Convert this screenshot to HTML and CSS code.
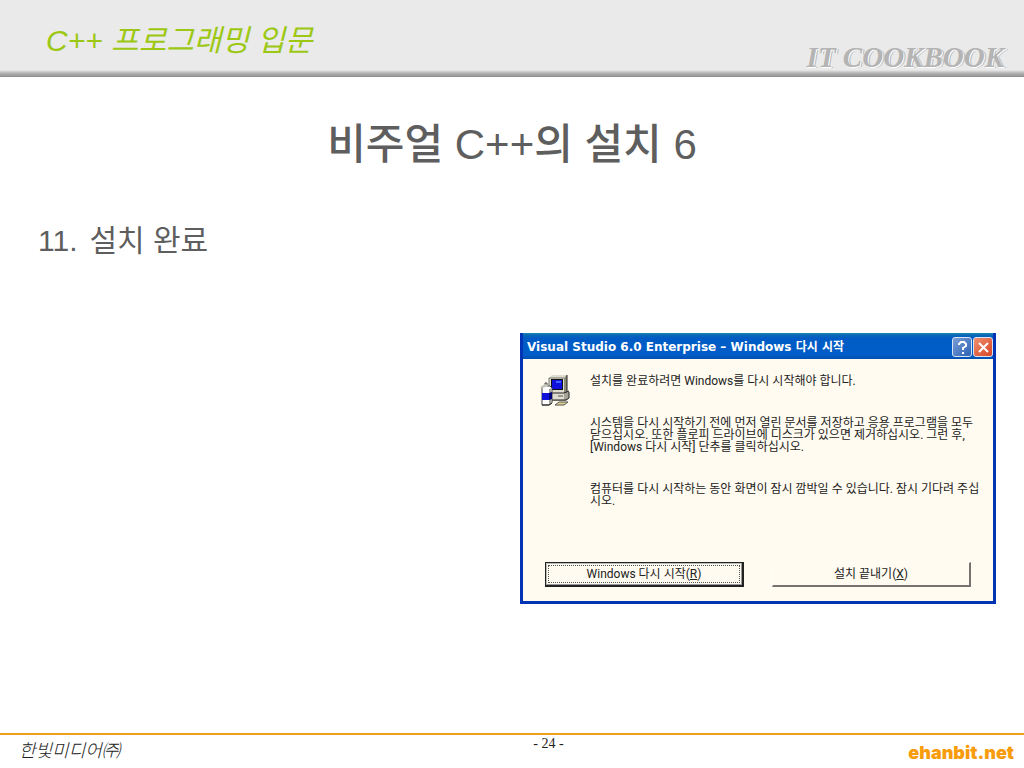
FILE: index.html
```html
<!DOCTYPE html>
<html lang="ko">
<head>
<meta charset="utf-8">
<meta name="viewport" content="width=device-width, initial-scale=1">
<title>C++ 프로그래밍 입문</title>
<link rel="stylesheet" href="styles.css">
</head>
<body>
<header class="slide-header">
  <p class="course">C++ 프로그래밍 입문</p>
  <p class="series">IT COOKBOOK</p>
</header>
<main class="slide-body">
  <h1 class="slide-title">비주얼 <span class="latin">C++</span>의 설치 <span class="latin">6</span></h1>
  <p class="step"><span class="step-number">11.</span> <span>설치 완료</span></p>
  <section class="dialog" role="dialog" aria-labelledby="dialog-title">
    <div class="titlebar">
      <h2 class="dialog-title" id="dialog-title">Visual Studio 6.0 Enterprise – Windows 다시 시작</h2>
      <button class="caption-button help" type="button" aria-label="도움말">
        <svg width="15" height="15" viewBox="0 0 15 15" fill="none" stroke="#fff" stroke-width="2"><path d="M4 5V4l2-2h3l2 2v2L8 8v2M7 13h2"/></svg>
      </button>
      <button class="caption-button close" type="button" aria-label="닫기">
        <svg width="15" height="15" viewBox="0 0 15 15" fill="none" stroke="#fff" stroke-width="2"><path d="M3 3l9 9M12 3l-9 9"/></svg>
      </button>
    </div>
    <div class="dialog-content">
      <svg class="setup-icon" width="32" height="32" viewBox="0 0 32 32" aria-hidden="true">
        <path d="M9 3l3-3h15v16l-2 3H9z" fill="#deddd0"/>
        <path d="M24 3l3-3v16l-3 3z" fill="#8c8c78"/>
        <path d="M9 3h15M9 3v12" stroke="#77776c" fill="none"/>
        <path d="M27 0v18" stroke="#222" fill="none"/>
        <path d="M11 4h12v11H11z" fill="#111"/>
        <path d="M12 5h10v9H12z" fill="#1010dc"/>
        <path d="M16 6h5v2h-5z" fill="#3c65ff"/>
        <path d="M10 18h14l5-2v7l-3 3H10z" fill="#a5a496"/>
        <path d="M10 18h14v7H10z" fill="#deddd0"/>
        <path d="M10 18h14l5-2M10 25h16l3-2v-6" stroke="#222" fill="none"/>
        <path d="M18 21h5" stroke="#555"/>
        <path d="M15 30l4-3h9l-4 3z" fill="#e2d48c" stroke="#555"/>
        <path d="M2 13l2-2h1V8h2v3h3l2 2v15l-3 2H2z" fill="#fff" stroke="#444"/>
        <path d="M0 12l5-3 4 2-7 2z" fill="#c5c5bd"/>
        <path d="M2 18h7v7H2z" fill="#1010d8"/>
        <path d="M9 14l3-1v15l-3 2z" fill="#a2a29d"/>
        <path d="M9 18l3-1v7l-3 1z" fill="#000078"/>
        <path d="M2 30h7l3-2" stroke="#222" fill="none"/>
      </svg>
      <div class="message">
        <p>설치를 완료하려면 Windows를 다시 시작해야 합니다.</p>
        <p>시스템을 다시 시작하기 전에 먼저 열린 문서를 저장하고 응용 프로그램을 모두<br>닫으십시오. 또한 플로피 드라이브에 디스크가 있으면 제거하십시오. 그런 후,<br>[Windows 다시 시작] 단추를 클릭하십시오.</p>
        <p>컴퓨터를 다시 시작하는 동안 화면이 잠시 깜박일 수 있습니다. 잠시 기다려 주십<br>시오.</p>
      </div>
    </div>
    <div class="dialog-actions">
      <button class="action default" type="button"><span class="focus-ring">Windows 다시 시작(<u>R</u>)</span></button>
      <button class="action" type="button">설치 끝내기(<u>X</u>)</button>
    </div>
  </section>
</main>
<footer class="slide-footer">
  <p class="publisher">한빛미디어㈜</p>
  <p class="page-number">- 24 -</p>
  <p class="site"><a href="#">ehanbit.net</a></p>
</footer>
</body>
</html>
```

FILE: styles.css
```css
* { box-sizing: border-box; }
body {
  margin: 0;
  min-height: 100vh;
  display: flex;
  flex-direction: column;
  background: #fff;
  color: #5e5e5e;
  font-family: "Liberation Sans", "Noto Sans CJK KR", sans-serif;
}
p, h1, h2 { margin: 0; font-weight: 400; }

.slide-header {
  display: flex;
  justify-content: space-between;
  align-items: flex-start;
  height: 77px;
  padding: 0 20px 0 46px;
  background: linear-gradient(#eaeaea 0, #eaeaea 70px, #b5b5b5 73px, #8c8c8c 77px);
}
.course {
  padding-top: 21px;
  color: #9cc814;
  font-size: 30px;
  line-height: 40px;
  font-style: italic;
}
.series {
  padding-top: 40px;
  color: #b4b4b4;
  font: italic bold 29px/34px "Liberation Serif", serif;
  text-shadow: 1px 1px 0 #fff, 2px 1px 0 #b4b4b4;
}

.slide-body {
  flex: 1;
  display: flex;
  flex-direction: column;
  padding: 36px 28px 40px;
}
.slide-title {
  text-align: center;
  font-size: 42px;
  line-height: 64px;
  font-weight: 500;
}
.latin { font-weight: 400; }
.step {
  display: flex;
  gap: 12px;
  margin-top: 42px;
  padding-left: 10px;
  font-size: 30px;
  line-height: 44px;
}

.dialog {
  align-self: flex-end;
  width: 476px;
  max-width: 100%;
  margin-top: 70px;
  padding-bottom: 14px;
  border: solid #0034b4;
  border-width: 0 3px 3px;
  background: #fffbf0;
  color: #222;
  font-family: "Roboto", "Noto Sans CJK KR", sans-serif;
  font-size: 12px;
}
.titlebar {
  display: flex;
  align-items: center;
  gap: 1px;
  height: 26px;
  padding: 2px 0 0 4px;
  background: linear-gradient(#168cae 0, #0c68b4 2px, #005cc4 5px, #005cc8 22px, #0050b0);
}
.dialog-title {
  flex: 1;
  color: #fff;
  font-family: "DejaVu Sans", "Noto Sans CJK KR", sans-serif;
  font-size: 12px;
  line-height: 20px;
  font-weight: 700;
  white-space: nowrap;
}
.caption-button {
  display: grid;
  place-items: center;
  width: 20px;
  height: 20px;
  padding: 0;
  border: 1px solid #d8e4f4;
  border-radius: 3px;
  background: linear-gradient(135deg, #7c9fd6, #2c62b4);
}
.caption-button.close { background: linear-gradient(135deg, #f09070, #d84424); }

.dialog-content {
  display: flex;
  gap: 18px;
  padding: 16px 12px 0 17px;
}
.setup-icon { flex: none; }
.message {
  display: grid;
  gap: 30px;
  line-height: 12px;
  white-space: nowrap;
}
.dialog-actions {
  display: grid;
  grid-template-columns: 1fr 1fr;
  gap: 28px;
  margin-top: 55px;
  padding: 0 22px;
}
.action {
  height: 25px;
  padding: 0;
  border: solid;
  border-width: 1px 2px 2px 1px;
  border-color: #fffdf6 #77716f #77716f #fffdf6;
  background: #fffbf0;
  color: #222;
  font: inherit;
  line-height: 16px;
}
.action.default {
  padding: 2px;
  border-color: #222;
  box-shadow: inset -1px -1px 0 #999, inset 1px 1px 0 #bbb;
}
.focus-ring {
  display: block;
  border: 1px dotted #555;
}

.slide-footer {
  display: grid;
  grid-template-columns: 1fr auto 1fr;
  align-items: start;
  height: 35px;
  padding: 0 10px 0 19px;
  border-top: 2px solid #f0a01c;
}
.publisher {
  padding-top: 4px;
  color: #222;
  font-size: 18px;
  line-height: 24px;
  font-style: italic;
  font-weight: 300;
}
.page-number {
  padding-left: 64px;
  color: #222;
  font: 14px/18px "Liberation Serif", serif;
}
.site {
  padding-top: 7px;
  justify-self: end;
  font-family: "Inter", sans-serif;
  font-size: 18px;
  line-height: 22px;
  font-weight: 900;
}
.site a {
  color: #f89c0c;
  text-decoration: none;
}
```
